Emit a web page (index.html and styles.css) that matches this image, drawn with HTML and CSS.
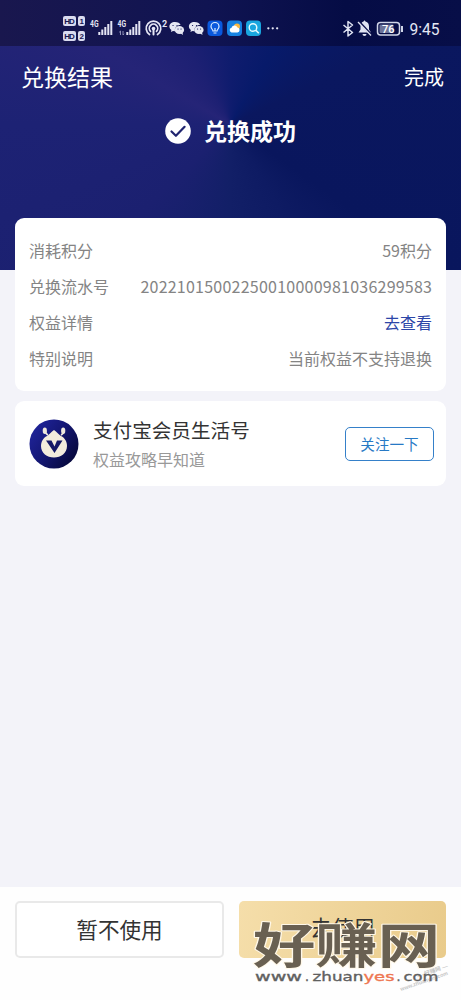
FILE: index.html
```html
<!DOCTYPE html>
<html lang="zh-CN">
<head>
<meta charset="utf-8">
<meta name="viewport" content="width=device-width">
<title>兑换结果</title>
<link rel="stylesheet" href="styles.css">
</head>
<body>
<main class="screen">
  <header class="hero">
    <div class="status">
      <svg class="status-icons" width="461" height="46" viewBox="0 0 461 46">
        <g fill="#d9dbef">
          <rect x="63" y="16" width="13" height="10" rx="2"/><rect x="78" y="16" width="7" height="10" rx="2"/>
          <rect x="63" y="31" width="13" height="10" rx="2"/><rect x="78" y="31" width="7" height="10" rx="2"/>
        </g>
        <g class="hd"><text x="64.3" y="24.2" textLength="10.5">HD</text><text x="79.4" y="24.2">1</text><text x="64.3" y="39.2" textLength="10.5">HD</text><text x="79.4" y="39.2">2</text></g>
        <g class="net"><text x="90" y="27" textLength="8.5" lengthAdjust="spacingAndGlyphs">4G</text><text x="117.5" y="27" textLength="8.5" lengthAdjust="spacingAndGlyphs">4G</text><text x="162" y="27">2</text></g>
        <path d="M99.3 35v-3M102.3 35v-5.5M105.3 35v-8M108.3 35v-11M111.3 35v-14M127.3 35v-3M130.3 35v-5.5M133.3 35v-8M136.3 35v-11M139.3 35v-14" stroke="#e4e5f4" stroke-width="2"/>
        <path d="M120.5 35v-4m-1.300 1.300l1.300-1.300M123 31v4m1.200-1.200L123 35" stroke="#8f91b8" fill="none"/>
        <g fill="none" stroke="#e4e5f4" stroke-width="1.700" stroke-linecap="round">
          <path d="M149.500 34.500a7.300 7.300 0 1 1 8 0M150.500 31.300a4.200 4.200 0 1 1 6 0"/><path d="M153.500 29.500v5" stroke-width="2"/>
        </g>
        <circle cx="153.500" cy="28.500" r="1.800" fill="#e4e5f4"/>
        <g id="chat">
          <path d="M175 22c-3.300 0-5.600 2-5.600 4.600 0 1.500.8 2.700 2 3.500l-.5 2 2.100-1.100 2 .3c-.7-4 2.500-6.300 5.600-6.200-.6-1.900-2.800-3.100-5.600-3.100z" fill="#e6e8f3"/>
          <ellipse cx="179.400" cy="30" rx="4.700" ry="4" fill="#e6e8f3"/><path d="M180 33l3 2-.5-3z" fill="#e6e8f3"/>
          <path d="M173 25.500h.1M177 25.500h.1M178 29h.1M181 29h.1" stroke="#101454" stroke-width="1.200" stroke-linecap="round"/>
        </g>
        <use href="#chat" x="19.500"/>
        <rect x="207.500" y="20.500" width="15" height="15.500" rx="4" fill="#0958dd"/>
        <path d="M213 31c0-1.500-2-2.200-2-4.500a4 4 0 0 1 8 0c0 2.300-2 3-2 4.500zM213.500 33h3M215 31v-3" fill="none" stroke="#dcecff" stroke-width="1.200"/>
        <rect x="227" y="20.500" width="15" height="15.500" rx="4" fill="#1683e3"/>
        <circle cx="237" cy="26.500" r="3" fill="#f9b941"/><path d="M231.500 32.500a2.500 2.500 0 0 1 0-4.800 3.300 3.300 0 0 1 6-.3 2.600 2.600 0 0 1 0 5.100z" fill="#fff"/>
        <rect x="246" y="20.500" width="15" height="15.500" rx="4" fill="#19a6df"/>
        <circle cx="253" cy="27.500" r="3.800" fill="none" stroke="#e7fbff" stroke-width="1.400"/><path d="M255.800 30.300l3 3" stroke="#e7fbff" stroke-width="1.600"/>
        <path d="M268.300 28.300h.1M272.700 28.300h.1M277.100 28.300h.1" stroke="#e5e7f4" stroke-width="2.200" stroke-linecap="round"/>
        <path d="M343.500 25l9 7.500-4.500 3.500V21.500l4.500 3.500-9 7.500" fill="none" stroke="#dfe3f2" stroke-width="1.500" stroke-linejoin="round"/>
        <path d="M358.500 32.500l2-3v-3c0-3 1.500-4.500 3-5l1-1.200 1 1.200c2.500.7 3.500 2.500 3.500 5v3l2 3z" fill="#dfe3f2"/><path d="M362.500 34h4a2 2 0 0 1-4 0z" fill="#dfe3f2"/>
        <path d="M359 21.500l13 14" stroke="#080d48" stroke-width="2"/><path d="M358 22l13 13.500" stroke="#dfe3f2" stroke-width="1.300"/>
        <rect x="377.500" y="22.500" width="22" height="12.500" rx="3" fill="none" stroke="#d0d5e8" stroke-width="1.500"/><rect x="379.500" y="24.500" width="14" height="8.500" rx="1" fill="#6c7399"/><path d="M402 26v6" stroke="#d0d5e8" stroke-width="2"/>
        <text x="382" y="32.600" class="battery">76</text>
        <text x="409.500" y="35" class="clock" textLength="30" lengthAdjust="spacingAndGlyphs">9:45</text>
      </svg>
    </div>
    <nav class="nav"><h1 class="title">兑换结果</h1><span class="done">完成</span></nav>
    <div class="success">
      <svg width="26" height="26" viewBox="0 0 26 26"><circle cx="13" cy="13" r="12.800" fill="#fff"/><path d="M6.500 13.500l4.400 4.300 8.700-9" fill="none" stroke="#20246f" stroke-width="2.200" stroke-linecap="round" stroke-linejoin="round"/></svg>
      <strong class="success-text">兑换成功</strong>
    </div>
  </header>

  <section class="card details">
    <div class="row"><span>消耗积分</span><span>59积分</span></div>
    <div class="row"><span>兑换流水号</span><span class="serial">20221015002250010000981036299583</span></div>
    <div class="row"><span>权益详情</span><a class="link">去查看</a></div>
    <div class="row"><span>特别说明</span><span>当前权益不支持退换</span></div>
  </section>

  <section class="card account">
    <svg class="avatar" width="50" height="50" viewBox="0 0 50 50">
      <defs><linearGradient id="disc" x1="0" y1="0" x2="1" y2=".7"><stop offset="0" stop-color="#2227a3"/><stop offset=".5" stop-color="#151878"/><stop offset="1" stop-color="#07093c"/></linearGradient></defs>
      <circle cx="25" cy="25" r="24.500" fill="url(#disc)"/>
      <path d="M19 16c-2-1-2.700-2.500-2.500-4M32 16c2-1 2.700-2.500 2.500-4" stroke="#eee8dc" stroke-width="1.500" fill="none"/>
      <ellipse cx="15.800" cy="11.800" rx="2.100" ry="3.200" fill="#eee8dc"/><ellipse cx="34.200" cy="11.800" rx="2.100" ry="3.200" fill="#eee8dc"/>
      <path d="M25 11c3 2 4 4 7 6 4 2 6 6 6 10 0 7-6 11.500-13 11.500S12 34 12 27c0-4 2-8 6-10 3-2 4-4 7-6z" fill="#f3ecdd"/>
      <path d="M17 21.500h5.500l3 6 2.500-6h5.500l-8 12.500z" fill="#151866"/>
    </svg>
    <div class="account-text"><h2 class="account-name">支付宝会员生活号</h2><p class="account-note">权益攻略早知道</p></div>
    <button class="follow">关注一下</button>
  </section>

  <footer class="actions">
    <button class="action later">暂不使用</button>
    <button class="action use">去使用</button>
    <svg class="watermark" width="221" height="90" viewBox="0 0 221 90">
      <g class="stamp">
        <text transform="translate(178 68) rotate(-19)" textLength="32" lengthAdjust="spacingAndGlyphs">— 好赚网 —</text>
        <text transform="translate(161 81) rotate(-19)" textLength="50" lengthAdjust="spacingAndGlyphs">www.zhuanyes.com</text>
      </g>
      <text class="mark" x="13" y="53" textLength="187" lengthAdjust="spacingAndGlyphs">好赚网</text>
      <g class="site">
        <text x="15" y="71" textLength="47" lengthAdjust="spacingAndGlyphs">www</text>
        <text x="65" y="71">.</text>
        <text x="72.500" y="71" textLength="51" lengthAdjust="spacingAndGlyphs">zhuan</text>
        <text class="accent" x="123.500" y="71" textLength="31" lengthAdjust="spacingAndGlyphs">yes</text>
        <text x="156.500" y="71">.</text>
        <text x="163.500" y="71" textLength="35" lengthAdjust="spacingAndGlyphs">com</text>
      </g>
    </svg>
  </footer>
</main>
</body>
</html>
```
FILE: styles.css
```css
* { box-sizing: border-box; }
body { margin: 0; font-family: "Noto Sans CJK SC", sans-serif; }
h1, h2, p { margin: 0; font-weight: 400; }
button { font-family: inherit; padding: 0; }
.screen { width: 461px; height: 1000px; display: flex; flex-direction: column; background: #f3f3f9; overflow: hidden; }
.hero {
  height: 270px; flex: none; color: #fff;
  background: conic-gradient(from 0deg at 50% 46%, #0f1c6e 0deg, #071a6a 30deg, #0a175f 65deg, #09165d 125deg, #0e1b63 150deg, #121f67 180deg, #1b2070 225deg, #1d2274 270deg, #252477 300deg, #1d2073 330deg, #0f1c6e 360deg);
}
.status { height: 46px; background: linear-gradient(90deg, #19174e, #101452 45%, #050c45 75%, #070e48); }
.status-icons { display: block; }
.hd { font: 700 8px "Liberation Sans", sans-serif; fill: #161650; }
.net { font: 700 9px Roboto, sans-serif; fill: #e4e5f4; }
.battery { font: 500 11px Roboto, sans-serif; fill: #fff; }
.clock { font: 400 17px Roboto, sans-serif; fill: #e4e7f4; }
.nav { height: 61px; padding: 0 17px 0 21px; display: flex; justify-content: space-between; align-items: center; }
.title { font-size: 23px; line-height: 34px; padding-bottom: 1px; }
.done { font-size: 20px; line-height: 30px; padding-top: 1px; }
.success { display: flex; justify-content: center; align-items: center; gap: 13px; height: 48px; }
.success-text { font-size: 23px; line-height: 34px; font-weight: 700; padding-bottom: 2px; }
.card { margin: 0 15px; background: #fff; border-radius: 9px; flex: none; }
.details { height: 173px; margin-top: -52px; padding: 14px 14px; position: relative; }
.row { height: 36px; display: flex; align-items: center; justify-content: space-between; font-size: 16px; color: #848484; }
.serial { letter-spacing: .24px; margin-right: -.24px; }
.link { color: #2c46a8; }
.account { height: 85px; margin-top: 10px; padding: 0 12px 0 14px; display: flex; align-items: center; }
.account-text { flex: 1; margin-left: 14px; }
.account-name { font-size: 19.6px; line-height: 30px; color: #333; }
.account-note { font-size: 16px; line-height: 28px; color: #999; }
.follow { width: 89px; height: 34px; border: 1.5px solid #3580c9; border-radius: 5px; background: #fff; color: #2779c5; font-size: 14.600px; padding-bottom: 1px; }
.actions { margin-top: auto; height: 113px; padding: 14px 15px; display: flex; gap: 15px; align-items: flex-start; background: #fefefe; position: relative; }
.action { height: 57px; border-radius: 5px; font-size: 21.600px; color: #333; padding-bottom: 2px; }
.later { width: 209px; border: 2px solid #e9e9e9; background: #fff; }
.use { width: 207px; border: 0; padding-bottom: 6px; background: linear-gradient(100deg, #f5deaa, #e9cb8b); }
.watermark { position: absolute; right: 0; bottom: 0; }
.mark { font: 700 47.500px "Noto Sans CJK SC", sans-serif; fill: #696052; stroke: #fff8e9; stroke-width: 2px; stroke-linejoin: round; paint-order: stroke; }
.site { font: 400 12.500px "DejaVu Sans", sans-serif; fill: #606060; stroke: #606060; stroke-width: .35px; }
.accent { fill: #ee7752; stroke: #ee7752; }
.stamp { font: 700 5.500px "Liberation Sans", "Noto Sans CJK SC", sans-serif; fill: #c5c5c5; }
```
